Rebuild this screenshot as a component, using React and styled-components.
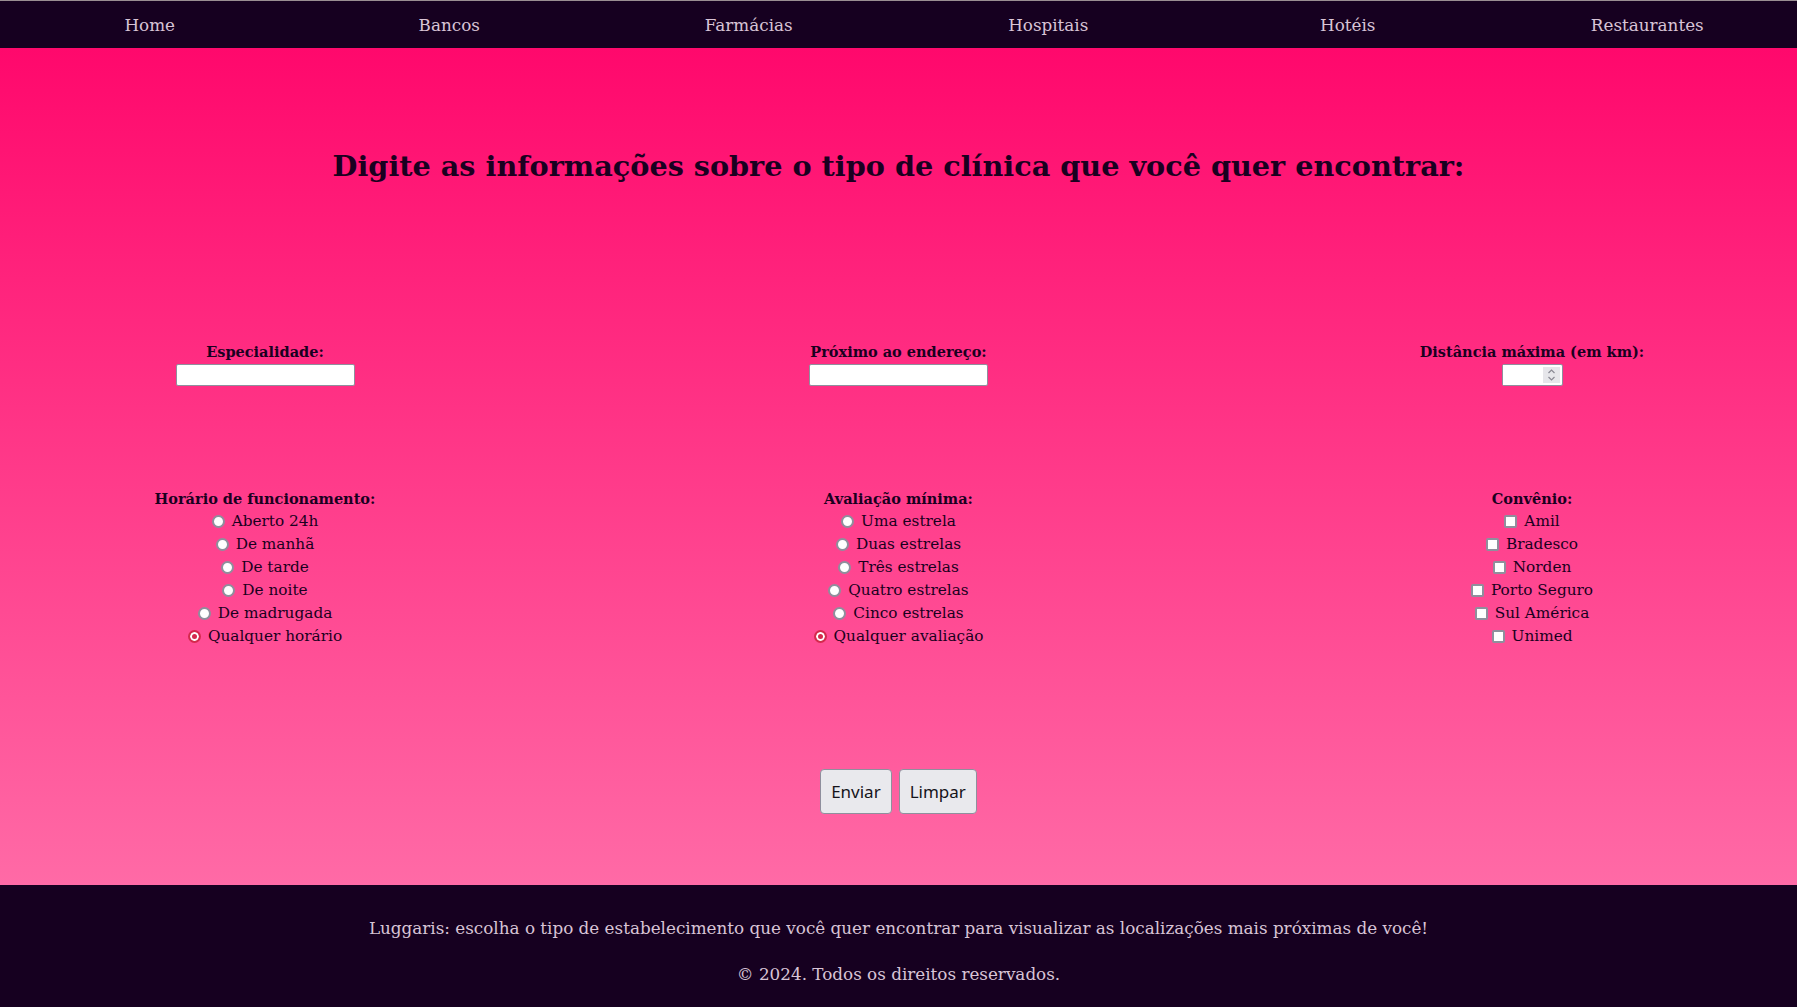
import React from 'react';
import styled, { createGlobalStyle } from 'styled-components'

const GlobalStyle = createGlobalStyle`
  html, body {
    margin: 0;
    padding: 0;
  }
  body {
    font-family: 'DejaVu Serif', serif;
    font-size: 16px;
    background: #160020;
  }
`

const Page = styled.div`
  width: 100%;
  min-height: 1007px;
  display: flex;
  flex-direction: column;
`

const Nav = styled.nav`
  height: 47px;
  background: #160020;
  border-top: 1px solid #9a8e92;
  display: flex;
  flex-direction: row;
  align-items: center;
`

const NavItem = styled.a`
  flex: 1;
  text-align: center;
  color: #d8c4d6;
  font-size: 16.8px;
  text-decoration: none;
  cursor: pointer;
`

const Main = styled.main`
  background: linear-gradient(180deg, #ff086c 0%, #ff6aa6 100%);
  display: flex;
  flex-direction: column;
  align-items: center;
  padding: 100px 0 71px 0;
  height: 837px;
  box-sizing: border-box;
`

const Title = styled.h1`
  margin: 0;
  font-size: 28.7px;
  line-height: 36px;
  font-weight: bold;
  color: #1a0020;
`

const Row = styled.div`
  width: 100%;
  box-sizing: border-box;
  display: grid;
  grid-template-columns: repeat(3, 300px);
  justify-content: space-between;
  padding: 0 115px;
  margin-top: ${p => p.$top}px;
`

const Field = styled.div`
  display: flex;
  flex-direction: column;
  align-items: center;
  color: #1a0020;
  font-size: 15.3px;
  line-height: 23px;
`

const Label = styled.label`
  font-weight: bold;
  font-size: 14.5px;
`

const TextInput = styled.input`
  width: 179px;
  height: 22px;
  box-sizing: border-box;
  border: 1px solid #8f8f9d;
  border-radius: 2px;
  background: white;
  margin-top: 1px;
`

const NumberBox = styled.div`
  width: 61px;
  height: 22px;
  box-sizing: border-box;
  margin-top: 1px;
  border: 1px solid #8f8f9d;
  border-radius: 2px;
  background: white;
  display: flex;
  align-items: stretch;

  input {
    width: 0;
    flex: 1;
    border: none;
    outline: none;
    padding: 0 2px;
    -moz-appearance: textfield;
  }
  input::-webkit-inner-spin-button,
  input::-webkit-outer-spin-button {
    -webkit-appearance: none;
    margin: 0;
  }
`

const Spinner = styled.div`
  width: 17px;
  margin: 2px 2px 2px 0;
  background: #e6e6ea;
  display: flex;
  align-items: center;
  justify-content: center;
`

const Option = styled.label`
  display: flex;
  align-items: center;
  gap: 7px;

  input {
    margin: 0;
    appearance: none;
    width: 13px;
    height: 13px;
    box-sizing: border-box;
    background: white;
    border: 2px solid #8f8f9d;
  }
  input[type="radio"] {
    border-radius: 50%;
  }
  input[type="radio"]:checked {
    border-color: #d42a4d;
    background: #d42a4d;
    box-shadow: inset 0 0 0 2px white;
  }
  input[type="checkbox"] {
    border-radius: 2px;
  }
`

const Buttons = styled.div`
  margin-top: auto;
  display: flex;
  gap: 7px;
`

const Button = styled.button`
  font-family: 'Noto Sans', sans-serif;
  font-size: 17px;
  height: 45px;
  padding: 0 10px;
  background: #e9e9ed;
  color: #15141a;
  border: 1px solid #8f8f9d;
  border-radius: 4px;
`

const Footer = styled.footer`
  flex: 1;
  background: #160020;
  color: #d8c4d6;
  font-size: 16.8px;
  display: flex;
  flex-direction: column;
  align-items: center;
  padding-top: 32px;
  gap: 23px;

  p {
    margin: 0;
    line-height: 23px;
  }
`

const horarios = ['Aberto 24h', 'De manhã', 'De tarde', 'De noite', 'De madrugada', 'Qualquer horário']
const avaliacoes = ['Uma estrela', 'Duas estrelas', 'Três estrelas', 'Quatro estrelas', 'Cinco estrelas', 'Qualquer avaliação']
const convenios = ['Amil', 'Bradesco', 'Norden', 'Porto Seguro', 'Sul América', 'Unimed']

const App = () => {
  return (
    <Page>
      <GlobalStyle />
      <Nav>
        <NavItem>Home</NavItem>
        <NavItem>Bancos</NavItem>
        <NavItem>Farmácias</NavItem>
        <NavItem>Hospitais</NavItem>
        <NavItem>Hotéis</NavItem>
        <NavItem>Restaurantes</NavItem>
      </Nav>
      <Main>
        <Title>Digite as informações sobre o tipo de clínica que você quer encontrar:</Title>
        <Row $top={156}>
          <Field>
            <Label>Especialidade:</Label>
            <TextInput type="text" />
          </Field>
          <Field>
            <Label>Próximo ao endereço:</Label>
            <TextInput type="text" />
          </Field>
          <Field>
            <Label>Distância máxima (em km):</Label>
            <NumberBox>
              <input type="number" />
              <Spinner>
                <svg width="9" height="14" viewBox="0 0 9 14" fill="none" stroke="#8a8a94" strokeWidth="1.2">
                  <path d="M1.5 5 L4.5 2 L7.5 5" />
                  <path d="M1.5 9 L4.5 12 L7.5 9" />
                </svg>
              </Spinner>
            </NumberBox>
          </Field>
        </Row>
        <Row $top={101}>
          <Field>
            <Label>Horário de funcionamento:</Label>
            {horarios.map((h, i) => (
              <Option key={h}>
                <input type="radio" name="horario" defaultChecked={i === horarios.length - 1} />
                {h}
              </Option>
            ))}
          </Field>
          <Field>
            <Label>Avaliação mínima:</Label>
            {avaliacoes.map((a, i) => (
              <Option key={a}>
                <input type="radio" name="avaliacao" defaultChecked={i === avaliacoes.length - 1} />
                {a}
              </Option>
            ))}
          </Field>
          <Field>
            <Label>Convênio:</Label>
            {convenios.map(c => (
              <Option key={c}>
                <input type="checkbox" />
                {c}
              </Option>
            ))}
          </Field>
        </Row>
        <Buttons>
          <Button>Enviar</Button>
          <Button>Limpar</Button>
        </Buttons>
      </Main>
      <Footer>
        <p>Luggaris: escolha o tipo de estabelecimento que você quer encontrar para visualizar as localizações mais próximas de você!</p>
        <p>© 2024. Todos os direitos reservados.</p>
      </Footer>
    </Page>
  )
}

export default App
